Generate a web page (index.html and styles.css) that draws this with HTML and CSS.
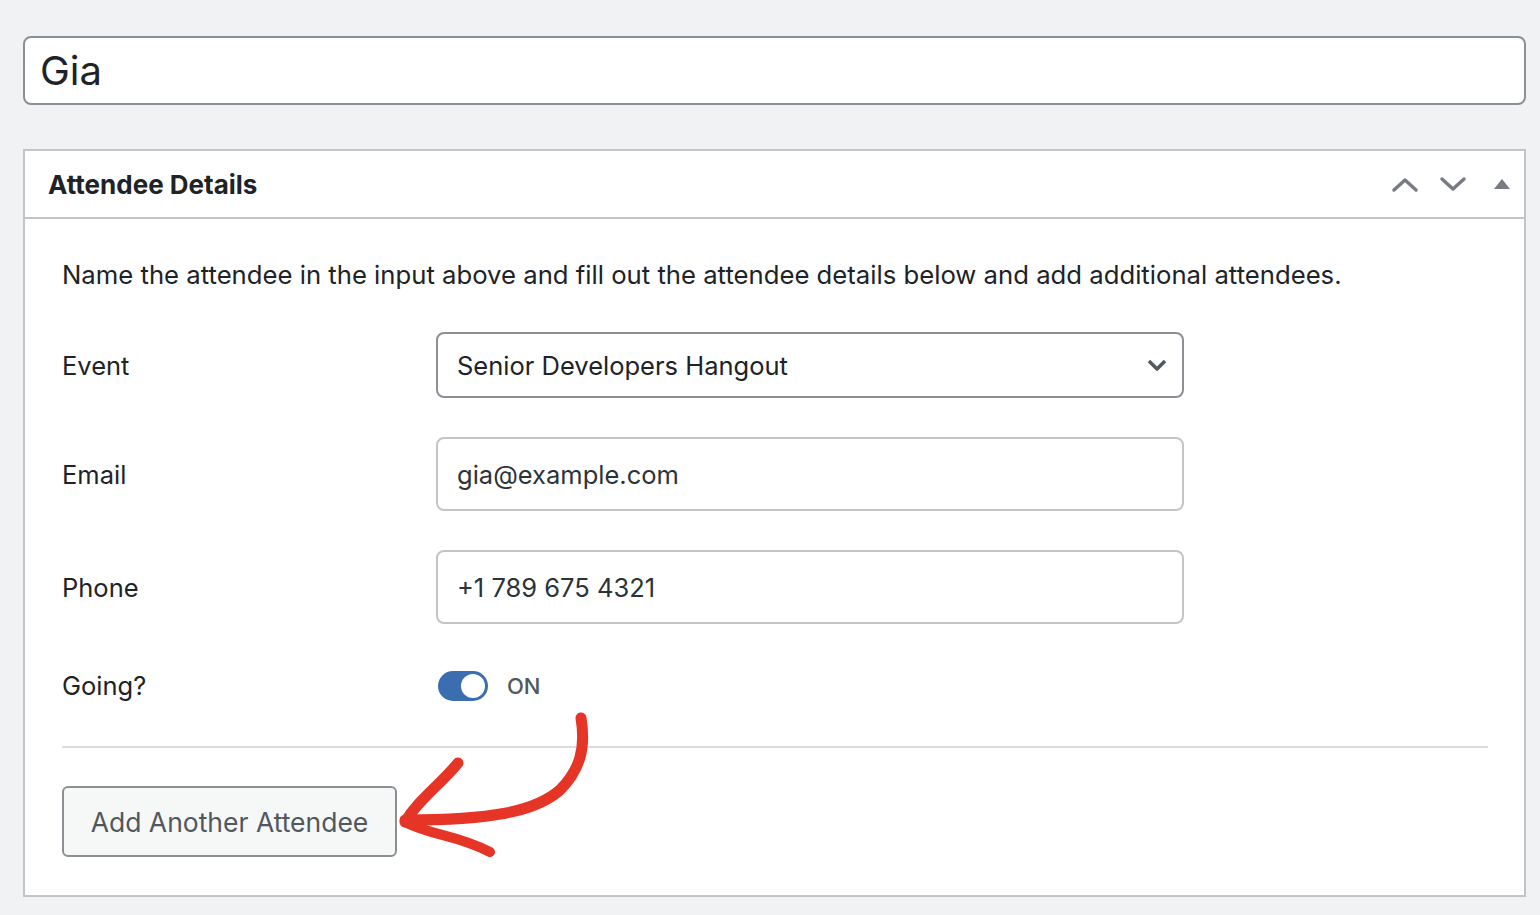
FILE: index.html
```html
<!DOCTYPE html>
<html lang="en">
<head>
  <meta charset="UTF-8">
  <title>Edit Attendee</title>
  <link rel="stylesheet" href="styles.css">
</head>
<body>
  <div class="wrap">
    <div class="title-field">Gia</div>

    <div class="postbox">
      <div class="postbox-header">
        <h2>Attendee Details</h2>
        <div class="handle-actions">
          <svg class="icon" width="30" height="20" viewBox="0 0 30 20"><path d="M4 16 L15 6 L26 16" fill="none" stroke="#787c82" stroke-width="3.5" stroke-linecap="round" stroke-linejoin="round"/></svg>
          <svg class="icon" width="30" height="20" viewBox="0 0 30 20"><path d="M4 5 L15 15 L26 5" fill="none" stroke="#787c82" stroke-width="3.5" stroke-linecap="round" stroke-linejoin="round"/></svg>
          <svg class="icon toggle-icon" width="20" height="20" viewBox="0 0 20 20"><path d="M2 15 L10 5 L18 15 Z" fill="#787c82"/></svg>
        </div>
      </div>

      <div class="inside">
        <p class="desc">Name the attendee in the input above and fill out the attendee details below and add additional attendees.</p>

        <div class="field-row">
          <label>Event</label>
          <div class="select-box">
            <span>Senior Developers Hangout</span>
            <svg width="22" height="14" viewBox="0 0 22 14"><path d="M3 3 L11 11 L19 3" fill="none" stroke="#50575e" stroke-width="3.5" stroke-linejoin="round"/></svg>
          </div>
        </div>

        <div class="field-row">
          <label>Email</label>
          <div class="text-box">gia@example.com</div>
        </div>

        <div class="field-row">
          <label>Phone</label>
          <div class="text-box">+1 789 675 4321</div>
        </div>

        <div class="field-row going">
          <label>Going?</label>
          <div class="toggle-wrap">
            <span class="toggle"><span class="knob"></span></span>
            <span class="toggle-label">ON</span>
          </div>
        </div>

        <hr class="divider">

        <button class="add-btn">Add Another Attendee</button>
      </div>
    </div>
  </div>

  <svg class="arrow" width="1540" height="915" viewBox="0 0 1540 915">
    <path d="M581 718 C586 748 580 770 560 790 C535 812 490 820 405 820" fill="none" stroke="#e63427" stroke-width="11" stroke-linecap="round"/>
    <path d="M458 763 C440 785 418 800 405 822" fill="none" stroke="#e63427" stroke-width="11" stroke-linecap="round"/>
    <path d="M405 822 C432 836 455 834 490 852" fill="none" stroke="#e63427" stroke-width="10" stroke-linecap="round"/>
  </svg>
</body>
</html>
```

FILE: styles.css
```css
body {
  margin: 0;
  background-color: #f1f2f4;
  font-family: "Inter", "Liberation Sans", sans-serif;
  color: #1d2327;
}
.wrap {
  padding: 36px 14px 20px 23px;
}
.title-field {
  height: 65px;
  border: 2px solid #8c8f94;
  border-radius: 8px;
  background: #fff;
  font-size: 40px;
  line-height: 65px;
  padding-left: 15px;
  color: #1d2327;
}
.postbox {
  margin-top: 44px;
  background: #fff;
  border: 2px solid #c3c4c7;
}
.postbox-header {
  display: flex;
  align-items: center;
  justify-content: space-between;
  height: 66px;
  border-bottom: 2px solid #c3c4c7;
  padding: 0 12px 0 23px;
}
.postbox-header h2 {
  margin: 0;
  font-size: 26px;
  font-weight: 700;
}
.handle-actions {
  display: flex;
  align-items: center;
  gap: 18px;
}
.handle-actions .toggle-icon {
  margin-left: 6px;
}
.inside {
  padding: 38px 36px 38px 37px;
}
.desc {
  margin: 0 0 39px;
  font-size: 25.7px;
  line-height: 36px;
}
.field-row {
  display: flex;
  align-items: center;
  margin-bottom: 39px;
}
.field-row label {
  width: 374px;
  font-size: 25.5px;
}
.select-box, .text-box {
  width: 748px;
  box-sizing: border-box;
  display: flex;
  align-items: center;
  justify-content: space-between;
  padding: 0 14px 0 19px;
  font-size: 25.5px;
  background: #fff;
  border-radius: 8px;
}
.select-box {
  height: 66px;
  border: 2px solid #8c8f94;
}
.text-box {
  height: 74px;
  border: 2px solid #c3c4c7;
  color: #2c3338;
}
.field-row.going {
  margin-top: 46px;
  margin-bottom: 45px;
}
.toggle-wrap {
  display: flex;
  align-items: center;
  gap: 19px;
  margin-left: 2px;
}
.toggle {
  width: 50px;
  height: 30px;
  box-sizing: border-box;
  border-radius: 15px;
  background: #3b6db1;
  display: flex;
  align-items: center;
  justify-content: flex-end;
  padding-right: 3px;
}
.knob {
  width: 24px;
  height: 24px;
  border-radius: 50%;
  background: #fff;
}
.toggle-label {
  font-size: 22px;
  font-weight: 500;
  color: #50575e;
}
.divider {
  border: none;
  border-top: 2px solid #dcdcde;
  margin: 0 0 38px;
  width: 1426px;
}
.add-btn {
  height: 71px;
  width: 335px;
  border: 2px solid #8c8f94;
  border-radius: 6px;
  background: #f6f7f7;
  color: #50575e;
  font-family: inherit;
  font-size: 26.5px;
  cursor: pointer;
}
.arrow {
  position: absolute;
  left: 0;
  top: 0;
  pointer-events: none;
}
```
